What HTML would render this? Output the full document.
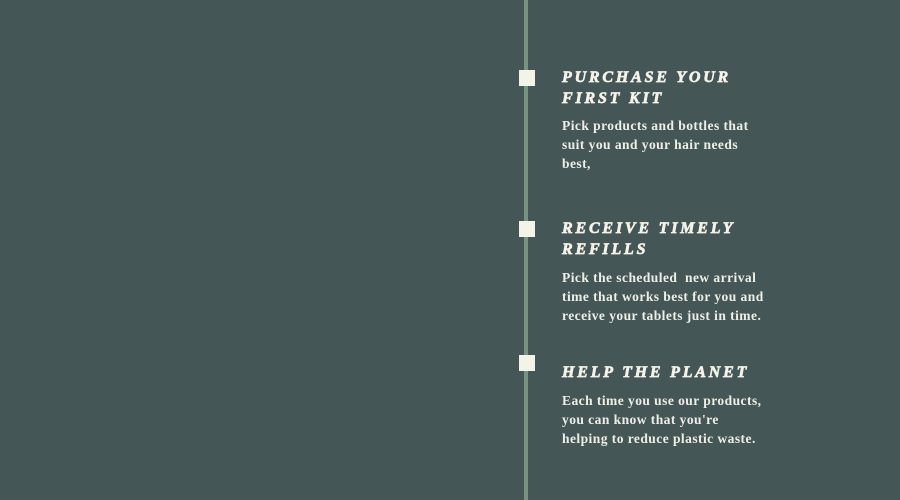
<!DOCTYPE html><html><head><style>
body{margin:0;width:900px;height:500px;background:#445656;position:relative;overflow:hidden;font-family:"Liberation Serif",serif;}
.line{position:absolute;left:524px;top:0;width:4px;height:500px;background:#76937f;}
.sq{position:absolute;left:519px;width:16px;height:16px;background:#f4f3e8;}
h2{position:absolute;left:562px;margin:0;font-size:16px;font-style:italic;font-weight:bold;color:#f4f3e8;letter-spacing:2.8px;line-height:21px;-webkit-text-stroke:0.7px #f4f3e8;}
p{position:absolute;left:562px;margin:0;font-size:13.5px;font-weight:bold;color:#eeeee4;line-height:19px;width:230px;letter-spacing:0.45px;}
</style></head><body>
<div class="line"></div>
<div class="sq" style="top:70px"></div>
<div class="sq" style="top:221px"></div>
<div class="sq" style="top:355px"></div>
<h2 style="top:67px">PURCHASE YOUR<br>FIRST KIT</h2>
<p style="top:116px">Pick products and bottles that<br>suit you and your hair needs<br>best,</p>
<h2 style="top:218px">RECEIVE TIMELY<br>REFILLS</h2>
<p style="top:268px">Pick the scheduled&nbsp; new arrival<br>time that works best for you and<br>receive your tablets just in time.</p>
<h2 style="top:362px">HELP THE PLANET</h2>
<p style="top:391px">Each time you use our products,<br>you can know that you're<br>helping to reduce plastic waste.</p>
</body></html>
